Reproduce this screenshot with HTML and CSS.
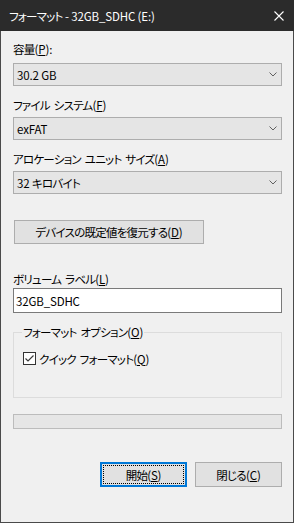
FILE: index.html
```html
<!DOCTYPE html>
<html lang="ja">
<head>
<meta charset="utf-8">
<link rel="stylesheet" href="styles.css">
</head>
<body>
<div class="window">
  <div class="titlebar">
    <span class="title">フォーマット<span class="latin"> - 32GB_SDHC (E:)</span></span>
    <svg class="close" width="10" height="10" viewBox="0 0 10 10"><path d="M0.5 0.5 L9.5 9.5 M9.5 0.5 L0.5 9.5" stroke="#ffffff" stroke-width="1.1" fill="none"/></svg>
  </div>
  <div class="content">
    <div class="lbl lbl-first">容量<span class="latin">(<u>P</u>):</span></div>
    <div class="combo"><span class="latin">30.2 GB</span><svg class="chev" width="8" height="5" viewBox="0 0 8 5"><path d="M0.5 0.5 L4 4 L7.5 0.5" stroke="#606060" stroke-width="1" fill="none"/></svg></div>
    <div class="lbl">ファイル システム<span class="latin">(<u>F</u>)</span></div>
    <div class="combo combo-tight"><span class="latin">exFAT</span><svg class="chev" width="8" height="5" viewBox="0 0 8 5"><path d="M0.5 0.5 L4 4 L7.5 0.5" stroke="#606060" stroke-width="1" fill="none"/></svg></div>
    <div class="lbl">アロケーション ユニット サイズ<span class="latin">(<u>A</u>)</span></div>
    <div class="combo combo-tight"><span><span class="latin">32 </span>キロバイト</span><svg class="chev" width="8" height="5" viewBox="0 0 8 5"><path d="M0.5 0.5 L4 4 L7.5 0.5" stroke="#606060" stroke-width="1" fill="none"/></svg></div>
    <div class="btn btn-restore">デバイスの既定値を復元する<span class="latin">(<u>D</u>)</span></div>
    <div class="lbl lbl-vol">ボリューム ラベル<span class="latin">(<u>L</u>)</span></div>
    <div class="textbox"><span class="latin">32GB_SDHC</span></div>
    <fieldset class="group">
      <legend class="legend">フォーマット オプション<span class="latin">(<u>O</u>)</span></legend>
      <div class="check-row">
        <span class="checkbox"><svg width="11" height="11" viewBox="0 0 11 11"><path d="M1.5 5.5 L4 8 L9.5 2.5" stroke="#3a3a3a" stroke-width="1.2" fill="none"/></svg></span>
        <span class="check-text">クイック フォーマット<span class="latin">(<u>Q</u>)</span></span>
      </div>
    </fieldset>
    <div class="progress"></div>
    <div class="actions">
      <div class="btn btn-default"><span class="focus">開始<span class="latin">(<u>S</u>)</span></span></div>
      <div class="btn btn-close">閉じる<span class="latin">(<u>C</u>)</span></div>
    </div>
  </div>
</div>
</body>
</html>
```
FILE: styles.css
```css
html, body {
  margin: 0;
  padding: 0;
  background: #f0f0f0;
}
body {
  font-family: "Noto Sans CJK JP", "Noto Sans", sans-serif;
  font-size: 11.5px;
  font-feature-settings: "palt";
  letter-spacing: -0.75px;
  word-spacing: 2px;
  color: #000;
}
.latin {
  letter-spacing: -0.15px;
  word-spacing: 0;
}
u {
  text-decoration-thickness: 1px;
  text-underline-offset: 1px;
}
.window {
  width: 294px;
  height: 523px;
  box-sizing: border-box;
  border: 1px solid #4a4a4a;
  border-top: none;
  background: #f0f0f0;
  display: flex;
  flex-direction: column;
}
.titlebar {
  height: 31px;
  margin: 0 -1px;
  background: #2b2b2b;
  color: #ffffff;
  display: flex;
  align-items: center;
  justify-content: space-between;
  padding: 0 10px 0 9px;
  flex-shrink: 0;
}
.title {
  line-height: 16px;
}
.content {
  padding: 0 11px 0 12px;
  display: flex;
  flex-direction: column;
}
.lbl {
  line-height: 16px;
  height: 16px;
  margin-top: 11px;
}
.lbl-first {
  margin-top: 10px;
}
.lbl-vol {
  margin-top: 27px;
}
.combo {
  height: 23px;
  box-sizing: border-box;
  border: 1px solid #adadad;
  background: #e5e5e5;
  display: flex;
  align-items: center;
  justify-content: space-between;
  padding: 0 4px 0 3px;
  margin-top: 6px;
}
.combo-tight {
  margin-top: 4px;
}
.chev {
  display: block;
}
.btn {
  box-sizing: border-box;
  border: 1px solid #adadad;
  background: #e1e1e1;
  display: flex;
  align-items: center;
  justify-content: center;
  line-height: 16px;
}
.btn-restore {
  width: 190px;
  height: 24px;
  margin-left: 1px;
  margin-top: 26px;
}
.textbox {
  height: 25px;
  box-sizing: border-box;
  border: 1px solid #7a7a7a;
  background: #ffffff;
  display: flex;
  align-items: center;
  padding-left: 2px;
  margin-top: 1px;
}
.group {
  margin: 11px 0 0 0;
  padding: 0 8px 0 9px;
  border: 1px solid #dcdcdc;
  min-width: 0;
}
.legend {
  padding: 0 1px;
  margin-left: -1px;
  line-height: 16px;
}
.check-row {
  display: flex;
  align-items: center;
  margin-top: 11px;
  margin-bottom: 31px;
  height: 15px;
}
.checkbox {
  width: 13px;
  height: 13px;
  box-sizing: border-box;
  border: 1px solid #333333;
  background: #ffffff;
  display: flex;
  align-items: center;
  justify-content: center;
  flex-shrink: 0;
}
.checkbox svg {
  display: block;
}
.check-text {
  margin-left: 3px;
  line-height: 16px;
}
.progress {
  height: 15px;
  box-sizing: border-box;
  border: 1px solid #bcbcbc;
  background: #e6e6e6;
  margin-top: 16px;
}
.actions {
  display: flex;
  justify-content: flex-end;
  gap: 8px;
  margin-top: 33px;
}
.btn-default,
.btn-close {
  width: 87px;
  height: 25px;
}
.btn-default {
  border: 2px solid #0078d7;
  padding: 1px;
}
.btn-default .focus {
  flex: 1;
  align-self: stretch;
  border: 1px dotted #000;
  display: flex;
  align-items: center;
  justify-content: center;
}
```
